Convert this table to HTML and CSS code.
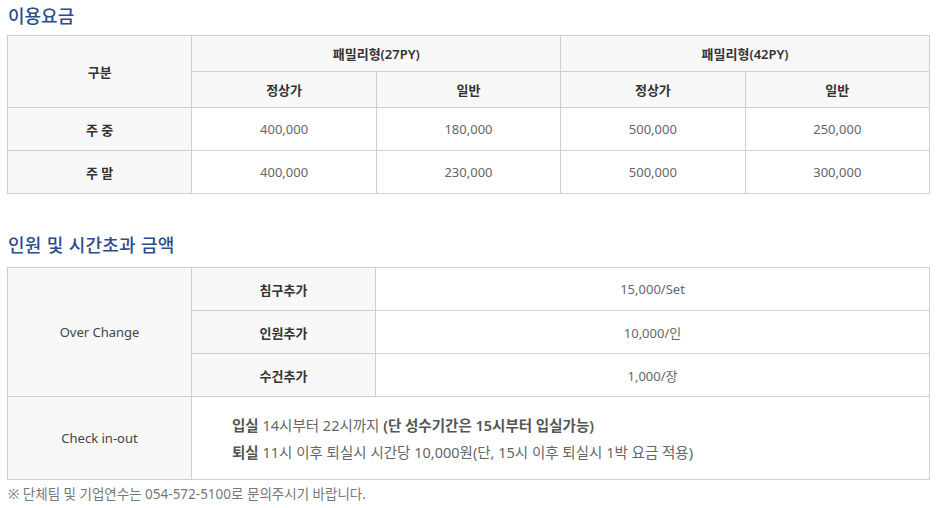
FILE: index.html
```html
<!DOCTYPE html>
<html lang="ko">
<head>
<meta charset="utf-8">
<link rel="stylesheet" href="styles.css">
</head>
<body>
<div class="wrap">
  <h2 class="title t1">이용요금</h2>
  <table class="tbl price">
    <colgroup><col><col><col><col><col></colgroup>
    <tr class="h36">
      <th rowspan="2">구분</th>
      <th colspan="2">패밀리형(27PY)</th>
      <th colspan="2">패밀리형(42PY)</th>
    </tr>
    <tr class="h36">
      <th>정상가</th><th>일반</th><th>정상가</th><th>일반</th>
    </tr>
    <tr class="h43">
      <th>주 중</th><td>400,000</td><td>180,000</td><td>500,000</td><td>250,000</td>
    </tr>
    <tr class="h43">
      <th>주 말</th><td>400,000</td><td>230,000</td><td>500,000</td><td>300,000</td>
    </tr>
  </table>

  <h2 class="title t2">인원 및 시간초과 금액</h2>
  <table class="tbl extra">
    <colgroup><col class="c1"><col class="c2"><col class="c3"></colgroup>
    <tr class="h43">
      <th rowspan="3" class="light">Over Change</th>
      <th>침구추가</th><td>15,000/Set</td>
    </tr>
    <tr class="h43"><th>인원추가</th><td>10,000/인</td></tr>
    <tr class="h43"><th>수건추가</th><td>1,000/장</td></tr>
    <tr class="h83">
      <th class="light">Check in-out</th>
      <td colspan="2" class="info">
        <p><b>입실</b> 14시부터 22시까지 <b>(단 성수기간은 15시부터 입실가능)</b></p>
        <p><b>퇴실</b> 11시 이후 퇴실시 시간당 10,000원(단, 15시 이후 퇴실시 1박 요금 적용)</p>
      </td>
    </tr>
  </table>
  <p class="note">※ 단체팀 및 기업연수는 054-572-5100로 문의주시기 바랍니다.</p>
</div>
</body>
</html>
```

FILE: styles.css
```css
* { box-sizing: border-box; }
html, body { margin: 0; padding: 0; background: #fff; }
body {
  font-family: "Noto Sans", "Noto Sans CJK KR", sans-serif;
  color: #555;
}
.wrap { padding: 0 8px 0 7px; width: 937px; }
.title {
  margin: 0;
  font-family: "Noto Sans CJK KR", sans-serif;
  font-size: 18px;
  font-weight: 500;
  color: #2c4d8c;
  line-height: 24px;
  padding-left: 1px;
}
.t1 { padding-top: 3px; height: 35px; }
.t2 { margin-top: 35px; height: 38px; padding-top: 3px; letter-spacing: 0.2px; }
.tbl {
  width: 923px;
  border-collapse: collapse;
  table-layout: fixed;
  font-size: 13px;
}
.tbl th, .tbl td {
  border: 1px solid #cfcfcf;
  text-align: center;
  vertical-align: middle;
  padding: 0;
}
.tbl th {
  background: #f8f8f8;
  color: #333;
  font-weight: 600;
  font-family: "Noto Sans", "Noto Sans CJK KR", sans-serif;
}
.tbl th.light { font-weight: 400; color: #444; }
.tbl td { color: #666; background: #fff; }
.price col { width: 20%; }
.extra .c1, .extra .c2 { width: 184px; }
.h36 { height: 36px; }
.h43 { height: 43px; }
.h83 { height: 83px; }
.tbl td.info {
  text-align: left;
  padding-left: 40px;
  padding-top: 1px;
  color: #666;
  font-size: 14.5px;
}
.info p { margin: 0; line-height: 27px; }
.info b { color: #555; font-weight: 600; }
.note {
  margin: 4px 0 0 1px;
  font-size: 13.5px;
  color: #777;
  line-height: 20px;
}
```
